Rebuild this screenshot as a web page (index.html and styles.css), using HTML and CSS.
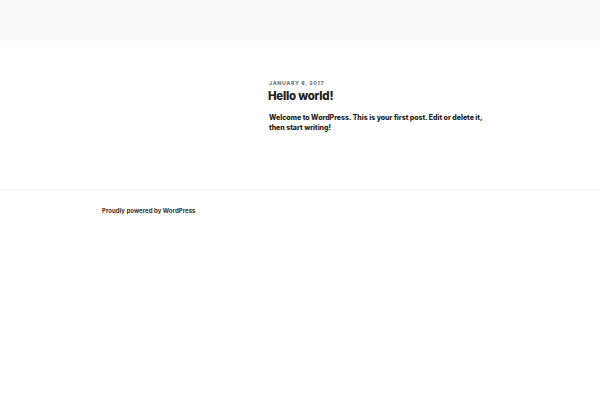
FILE: index.html
```html
<!DOCTYPE html>
<html>
<head>
<meta charset="utf-8">
<link rel="stylesheet" href="styles.css">
</head>
<body>
<header class="site-header"></header>
<main class="site-content">
  <div class="wrap">
    <article class="post">
      <div class="post-date">January 9, 2017</div>
      <h2 class="post-title">Hello world!</h2>
      <p class="post-body">Welcome to WordPress. This is your first post. Edit or delete it, then start writing!</p>
    </article>
  </div>
</main>
<footer class="site-footer">
  <div class="footer-wrap">Proudly powered by WordPress</div>
</footer>
</body>
</html>
```
FILE: styles.css
```css
html, body { margin: 0; padding: 0; background: #fff; }
body { font-family: Inter, "Liberation Sans", sans-serif; color: #222; }
.site-header { height: 41px; background: #fafafa; }
.site-content { padding-top: 38px; height: 110px; border-bottom: 1px solid #f3f3f3; }
.wrap { display: flex; padding-left: 269px; }
.post { width: 225px; }
.post-date { font-size: 5.2px; font-weight: 800; letter-spacing: 0.13em; text-transform: uppercase; color: #767676; line-height: 8px; }
.post-title { margin: 1px 0 0 -1px; font-size: 11.5px; font-weight: 800; letter-spacing: -0.25px; line-height: 16px; color: #222; }
.post-body { margin: 9px 0 0; font-size: 7px; font-weight: 800; letter-spacing: -0.03px; line-height: 10px; color: #222; }
.site-footer { padding-top: 16px; }
.footer-wrap { padding-left: 102px; font-size: 6.1px; font-weight: 700; color: #333; line-height: 10px; }
```
